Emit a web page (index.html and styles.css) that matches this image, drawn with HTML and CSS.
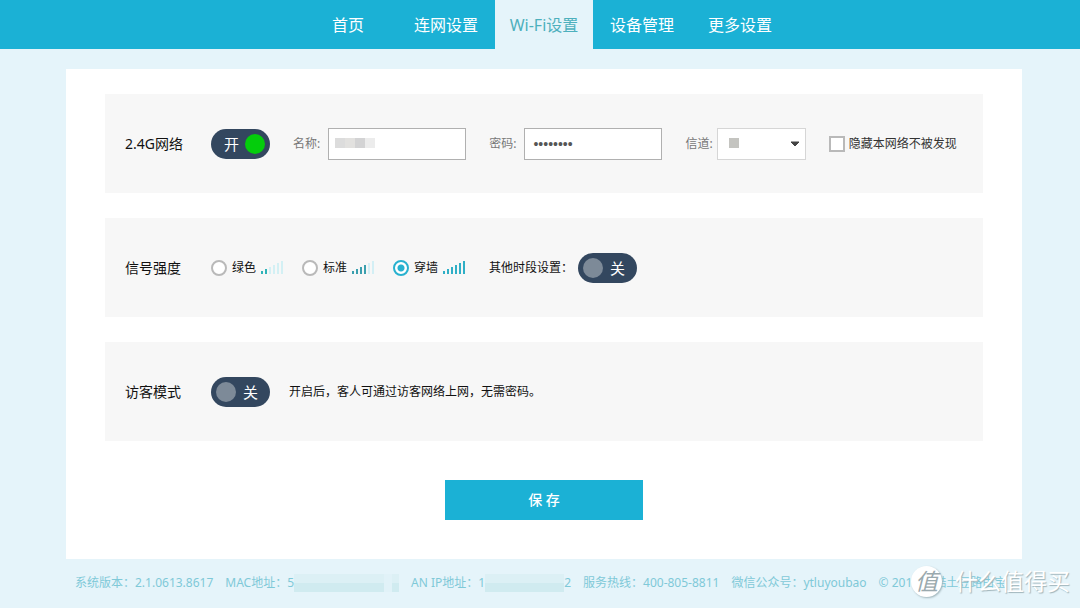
FILE: index.html
```html
<!DOCTYPE html>
<html lang="zh-CN">
<head>
<meta charset="utf-8">
<meta name="viewport" content="width=device-width, initial-scale=1">
<title>Wi-Fi设置</title>
<link rel="stylesheet" href="styles.css">
</head>
<body>
<header class="topbar">
  <nav class="nav">
    <a class="nav-item" href="#home">首页</a>
    <a class="nav-item" href="#network">连网设置</a>
    <a class="nav-item active" href="#wifi" aria-current="page">Wi-Fi设置</a>
    <a class="nav-item" href="#devices">设备管理</a>
    <a class="nav-item" href="#more">更多设置</a>
  </nav>
</header>

<main class="page">
  <form class="card">
    <section class="panel">
      <h2 class="panel-title">2.4G网络</h2>
      <div class="controls">
        <button class="toggle on" type="button" role="switch" aria-checked="true" aria-label="2.4G网络"><span>开</span><span class="knob"></span></button>
        <div class="field">
          <label for="ssid">名称:</label>
          <div class="input-wrap">
            <input class="text-input" id="ssid" type="text">
            <span class="mosaic"><i class="m1"></i><i class="m2"></i><i class="m3"></i><i class="m4"></i></span>
          </div>
        </div>
        <div class="field">
          <label for="pwd">密码:</label>
          <input class="text-input password" id="pwd" type="password" value="12345678">
        </div>
        <div class="field channel">
          <label for="channel">信道:</label>
          <div class="input-wrap">
            <select class="select" id="channel"><option></option></select>
            <span class="mosaic channel-mosaic"><i class="m5"></i></span>
            <svg class="caret" width="10" height="6" viewBox="0 0 10 6"><path d="M1 1h8L5 5z" fill="#444" stroke="#444" stroke-width="1" stroke-linejoin="round"/></svg>
          </div>
        </div>
        <div class="check">
          <input class="checkbox" id="hide" type="checkbox">
          <label for="hide">隐藏本网络不被发现</label>
        </div>
      </div>
    </section>

    <section class="panel">
      <h2 class="panel-title">信号强度</h2>
      <div class="controls">
        <div class="radios">
          <label class="radio-item"><input class="radio" type="radio" name="signal"><span>绿色</span>
            <svg class="bars" width="23" height="14" viewBox="0 0 23 14"><g fill="#2fb3b8"><path d="M0 10h2v3H0zM4 8h2v5H4z"/></g><g fill="#d3f0f4"><path d="M8 6h2v7H8zM12 4h2v9h-2zM16 2h2v11h-2zM20 0h2v13h-2z"/></g></svg>
          </label>
          <label class="radio-item"><input class="radio" type="radio" name="signal"><span>标准</span>
            <svg class="bars" width="23" height="14" viewBox="0 0 23 14"><g fill="#3a9fae"><path d="M0 10h2v3H0zM4 8h2v5H4zM8 6h2v7H8zM12 4h2v9h-2z"/></g><g fill="#d3eff5"><path d="M16 2h2v11h-2zM20 0h2v13h-2z"/></g></svg>
          </label>
          <label class="radio-item"><input class="radio" type="radio" name="signal" checked><span>穿墙</span>
            <svg class="bars" width="23" height="14" viewBox="0 0 23 14"><path fill="#2fafc6" d="M0 10h2v3H0zM4 8h2v5H4zM8 6h2v7H8zM12 4h2v9h-2zM16 2h2v11h-2zM20 0h2v13h-2z"/></svg>
          </label>
        </div>
        <div class="schedule">
          <span>其他时段设置：</span>
          <button class="toggle" type="button" role="switch" aria-checked="false" aria-label="其他时段设置"><span class="knob"></span><span>关</span></button>
        </div>
      </div>
    </section>

    <section class="panel">
      <h2 class="panel-title">访客模式</h2>
      <div class="controls guest">
        <button class="toggle" type="button" role="switch" aria-checked="false" aria-label="访客模式"><span class="knob"></span><span>关</span></button>
        <span>开启后，客人可通过访客网络上网，无需密码。</span>
      </div>
    </section>

    <button class="save" type="button">保 存</button>
  </form>

  <footer class="footer">
    <span>系统版本：2.1.0613.8617</span>
    <span class="masked">MAC地址：5<i class="smear mac"></i></span>
    <span class="masked lan">AN IP地址：1<i class="smear ip"></i>2</span>
    <span>服务热线：400-805-8811</span>
    <span>微信公众号：ytluyoubao</span>
    <span class="copyright">© 2014 优酷土豆路由宝</span>
  </footer>
</main>

<div class="watermark"><span class="seal">值</span><span>什么值得买</span></div>
</body>
</html>
```
FILE: styles.css
```css
* {
  box-sizing: border-box;
}

body {
  margin: 0;
  background: #e5f4fa;
  color: #111;
  font: 12px/18px "Noto Sans", "Noto Sans CJK SC", sans-serif;
}

button,
input,
select {
  font: inherit;
}

.topbar {
  background: #1bb1d5;
  padding-left: 8px;
}

.nav {
  display: flex;
  justify-content: center;
}

.nav-item {
  width: 98px;
  height: 49px;
  line-height: 51px;
  text-align: center;
  font-size: 16px;
  color: #fff;
  text-decoration: none;
  white-space: nowrap;
}

.nav-item.active {
  background: #e5f4fa;
  color: #4db0bd;
}

.page {
  box-sizing: content-box;
  max-width: 956px;
  margin: 0 auto;
  padding: 20px 0 0 8px;
}

.card {
  display: flex;
  flex-direction: column;
  gap: 25px;
  padding: 25px 39px 39px;
  background: #fff;
}

.panel {
  display: flex;
  align-items: center;
  min-height: 99px;
  padding: 0 20px;
  background: #f7f7f7;
}

.panel-title {
  flex: none;
  width: 86px;
  margin: 0;
  font-size: 14px;
  font-weight: 400;
  line-height: 20px;
}

.controls {
  display: flex;
  align-items: center;
  gap: 23px;
  white-space: nowrap;
}

.guest {
  gap: 19px;
}

.toggle {
  display: flex;
  align-items: center;
  justify-content: space-between;
  width: 59px;
  height: 30px;
  padding: 0 12px 0 5px;
  border: 0;
  border-radius: 15px;
  background: #33475f;
  color: #fff;
  font-size: 15px;
}

.toggle.on {
  padding: 0 5px 0 13px;
}

.knob {
  width: 20px;
  height: 20px;
  border-radius: 50%;
  background: #7d8a98;
}

.on .knob {
  background: #04cd0c;
}

.field {
  display: flex;
  align-items: center;
  gap: 8px;
  color: #777;
}

.channel {
  gap: 4px;
}

.input-wrap {
  position: relative;
}

.text-input {
  display: block;
  width: 138px;
  height: 32px;
  padding: 0 8px;
  border: 1px solid #b0b0b0;
  border-radius: 0;
  background: #fff;
  color: #555;
}

.password {
  font-family: "Liberation Sans", sans-serif;
  font-size: 14px;
}

.select {
  display: block;
  width: 89px;
  height: 32px;
  border: 1px solid #d6d6d6;
  border-radius: 0;
  background: #fff;
  appearance: none;
}

.caret {
  position: absolute;
  top: 13px;
  right: 6px;
  pointer-events: none;
}

.mosaic {
  position: absolute;
  top: 10px;
  left: 7px;
  display: flex;
  pointer-events: none;
}

.channel-mosaic {
  left: 12px;
}

.mosaic i {
  width: 10px;
  height: 10px;
}

.m1 { background: #dcdcdc; }
.m2 { background: #e2e1df; }
.m3 { background: #d3d3d4; }
.m4 { background: #ececec; }
.m5 { background: #c4c4c0; }

.check {
  display: flex;
  align-items: center;
  gap: 4px;
  color: #333;
}

.checkbox,
.radio {
  width: 16px;
  height: 16px;
  margin: 0;
  border: 2px solid #b9b9b9;
  background: #fff;
  appearance: none;
}

.radio {
  border-radius: 50%;
}

.radio:checked {
  border-color: #28b1cf;
  background: radial-gradient(circle, #28b1cf 3px, #fff 4px);
}

.radios {
  display: flex;
  gap: 18px;
}

.radio-item {
  display: flex;
  align-items: center;
  gap: 5px;
}

.schedule {
  display: flex;
  align-items: center;
  gap: 5px;
}

.save {
  align-self: center;
  width: 198px;
  height: 40px;
  margin-top: 14px;
  border: 0;
  background: #1bb1d5;
  color: #fff;
  font-size: 14px;
  font-weight: 500;
}

.footer {
  display: flex;
  gap: 12px;
  padding: 15px 9px;
  color: #7fc9d8;
  white-space: nowrap;
}

.masked {
  display: flex;
  align-items: center;
}

.smear {
  height: 18px;
  background: linear-gradient(#dcf0f5 50%, #d0ebf0 50%);
}

.mac {
  width: 105px;
  background: linear-gradient(90deg, transparent 90px, #e1f2f8 90px 98px, transparent 98px), linear-gradient(#dcf0f5 50%, #d0ebf0 50%);
}

.ip {
  width: 79px;
}

.watermark {
  position: absolute;
  right: 10px;
  bottom: 11px;
  display: flex;
  align-items: center;
  gap: 13px;
  color: #fff;
  font-size: 23px;
  line-height: 32px;
  text-shadow: 1px 1px 1px #9fb4ba;
}

.seal {
  width: 31px;
  height: 31px;
  border-radius: 50%;
  background: #fff;
  box-shadow: 1px 1px 2px #9fb4ba;
  color: #9aa9ae;
  text-align: center;
  text-shadow: none;
  line-height: 30px;
  font-style: italic;
}
```
